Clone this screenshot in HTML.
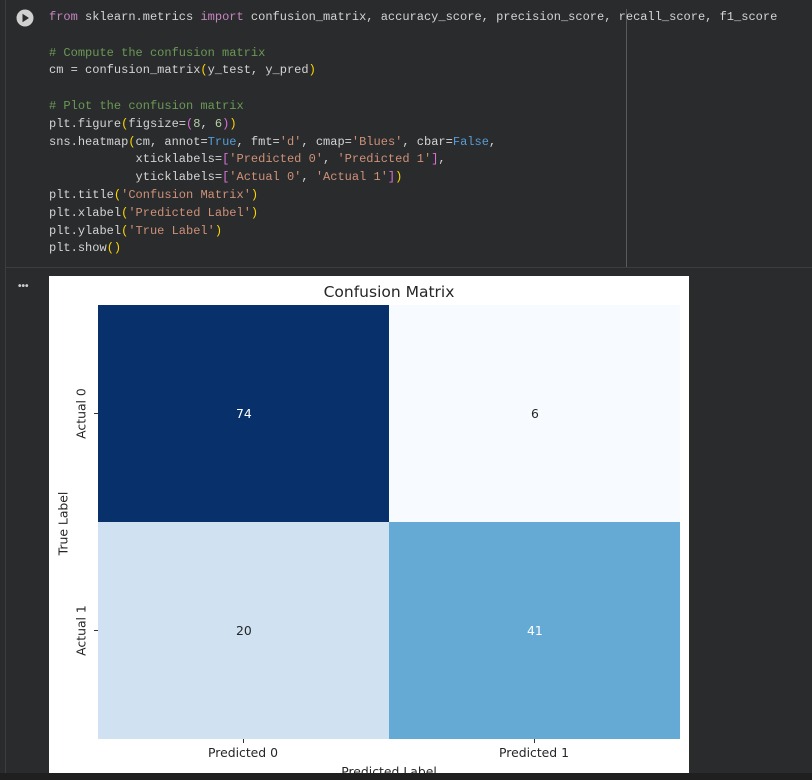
<!DOCTYPE html>
<html><head><meta charset="utf-8"><style>
*{margin:0;padding:0;box-sizing:border-box}
body{width:812px;height:780px;background:#2a2b2d;position:relative;overflow:hidden;font-family:"Liberation Mono",monospace}
.code{position:absolute;left:49px;top:9px;font-size:12.03px;line-height:17.8px;color:#d4d4d4;white-space:pre}
.k{color:#c586c0}.c{color:#6a9955}.s{color:#ce9178}.b{color:#569cd6}.y{color:#ffd700}.p{color:#da70d6}.n{color:#b5cea8}
.ab{position:absolute}
.lbl{font-family:"DejaVu Sans","Liberation Sans",sans-serif;color:#262626;position:absolute;font-size:12.4px;white-space:nowrap}
</style></head><body>
<div class="ab" style="left:5px;top:0;width:1px;height:773px;background:#3c3d40"></div>
<div class="ab" style="left:626px;top:9px;width:1px;height:258px;background:#5a5b5e"></div>
<div class="ab" style="left:6px;top:267px;width:806px;height:1px;background:#3c3d40"></div>
<div class="ab" style="left:0;top:773px;width:812px;height:7px;background:#1f1f20"></div>
<svg class="ab" style="left:16px;top:9px" width="18" height="18"><circle cx="9" cy="9" r="8.5" fill="#d0d0d0"/><path d="M6.5 4.8 L13 9 L6.5 13.2Z" fill="#2a2b2d"/></svg>
<div class="ab" style="left:18px;top:281px;color:#ccc;font-size:10px;font-family:'Liberation Sans',sans-serif;font-weight:bold">•••</div>
<div class="code"><span class="k">from</span> sklearn.metrics <span class="k">import</span> confusion_matrix, accuracy_score, precision_score, recall_score, f1_score

<span class="c"># Compute the confusion matrix</span>
cm = confusion_matrix<span class="y">(</span>y_test, y_pred<span class="y">)</span>

<span class="c"># Plot the confusion matrix</span>
plt.figure<span class="y">(</span>figsize=<span class="p">(</span><span class="n">8</span>, <span class="n">6</span><span class="p">)</span><span class="y">)</span>
sns.heatmap<span class="y">(</span>cm, annot=<span class="b">True</span>, fmt=<span class="s">'d'</span>, cmap=<span class="s">'Blues'</span>, cbar=<span class="b">False</span>,
            xticklabels=<span class="p">[</span><span class="s">'Predicted 0'</span>, <span class="s">'Predicted 1'</span><span class="p">]</span>,
            yticklabels=<span class="p">[</span><span class="s">'Actual 0'</span>, <span class="s">'Actual 1'</span><span class="p">]</span><span class="y">)</span>
plt.title<span class="y">(</span><span class="s">'Confusion Matrix'</span><span class="y">)</span>
plt.xlabel<span class="y">(</span><span class="s">'Predicted Label'</span><span class="y">)</span>
plt.ylabel<span class="y">(</span><span class="s">'True Label'</span><span class="y">)</span>
plt.show<span class="y">()</span></div>

<div class="ab" style="left:49px;top:276px;width:640px;height:497px;background:#fff;overflow:hidden">
  <div class="lbl" style="left:0;width:680px;text-align:center;top:7px;font-size:15.5px">Confusion Matrix</div>
  <div class="ab" style="left:49px;top:29px;width:291px;height:217px;background:#08306b"></div>
  <div class="ab" style="left:340px;top:29px;width:291px;height:217px;background:#f7fbff"></div>
  <div class="ab" style="left:49px;top:246px;width:291px;height:217px;background:#d0e1f2"></div>
  <div class="ab" style="left:340px;top:246px;width:291px;height:217px;background:#65aad4"></div>
  <div class="lbl" style="left:187px;top:130px;color:#fff">74</div>
  <div class="lbl" style="left:482px;top:130px">6</div>
  <div class="lbl" style="left:187px;top:347px">20</div>
  <div class="lbl" style="left:478px;top:347px;color:#fff">41</div>
  <div class="ab" style="left:45px;top:137px;width:4px;height:1px;background:#333"></div>
  <div class="ab" style="left:45px;top:354px;width:4px;height:1px;background:#333"></div>
  <div class="ab" style="left:194px;top:463px;width:1px;height:4px;background:#333"></div>
  <div class="ab" style="left:485px;top:463px;width:1px;height:4px;background:#333"></div>
  <div class="lbl" style="left:-4px;top:130px;transform:rotate(-90deg);width:72px;text-align:center">Actual 0</div>
  <div class="lbl" style="left:-4px;top:347px;transform:rotate(-90deg);width:72px;text-align:center">Actual 1</div>
  <div class="lbl" style="left:-26px;top:240px;transform:rotate(-90deg);width:80px;text-align:center">True Label</div>
  <div class="lbl" style="left:134px;top:469px;width:120px;text-align:center">Predicted 0</div>
  <div class="lbl" style="left:425px;top:469px;width:120px;text-align:center">Predicted 1</div>
  <div class="lbl" style="left:280px;top:488px;width:120px;text-align:center">Predicted Label</div>
</div>
</body></html>
